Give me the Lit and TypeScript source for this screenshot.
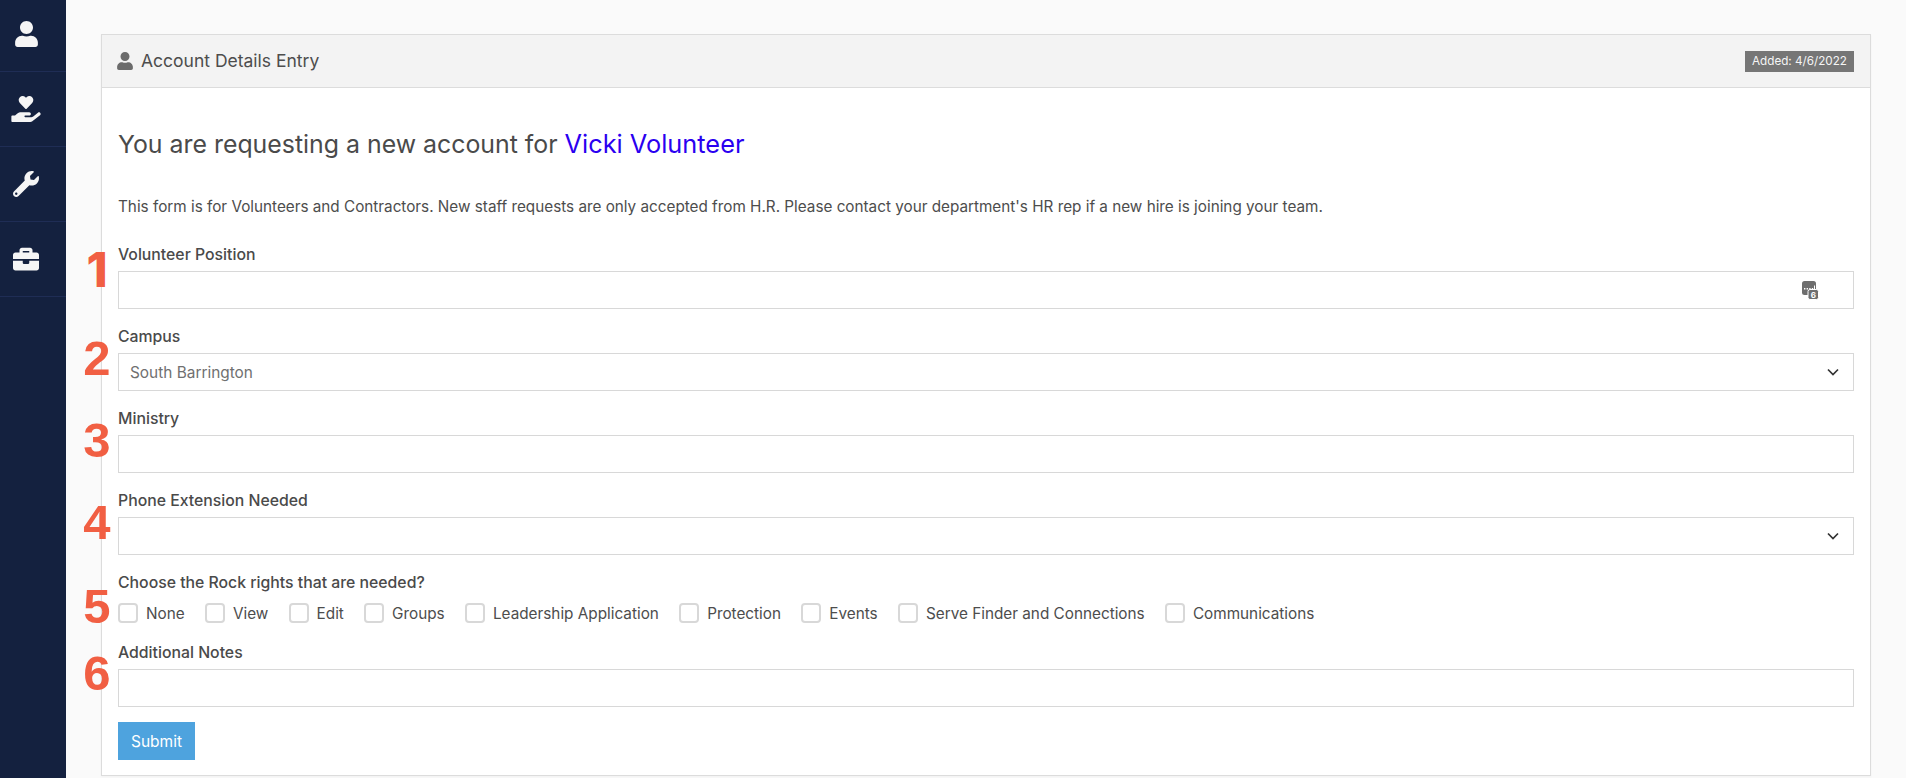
import { LitElement, html, css, svg } from "lit";
import { customElement } from "lit/decorators.js";

const USER = "M224 256c70.7 0 128-57.3 128-128S294.7 0 224 0 96 57.3 96 128s57.3 128 128 128zm89.6 32h-16.7c-22.2 10.2-46.9 16-72.9 16s-50.6-5.8-72.9-16h-16.7C60.2 288 0 348.2 0 422.4V464c0 26.5 21.5 48 48 48h352c26.5 0 48-21.5 48-48v-41.6c0-74.2-60.2-134.4-134.4-134.4z";
const HAND = "M275.3 250.5c7 7.4 18.4 7.4 25.5 0l108.9-114.2c31.6-33.2 29.8-88.2-5.6-118.8-30.8-26.7-76.7-21.9-104.9 7.7L288 36.9l-11.1-11.6C248.7-4.4 202.8-9.2 172 17.5c-35.3 30.6-37.2 85.6-5.6 118.8l108.9 114.2zm290 77.6c-11.8-10.7-30.2-10-42.6 0L430.3 402c-11.3 9.1-25.4 14-40 14H272c-8.8 0-16-7.2-16-16s7.2-16 16-16h78.3c15.9 0 30.7-10.9 33.3-26.6 3.3-20-12.1-37.4-31.6-37.4H192c-27 0-53.1 9.3-74.1 26.3L71.4 384H16c-8.8 0-16 7.2-16 16v96c0 8.8 7.2 16 16 16h356.8c14.5 0 28.6-4.9 40-14l151.2-121c15.2-12.2 16.4-35.1 1.3-48.9z";
const WRENCH = "M507.73 109.1c-2.24-9.03-13.54-12.09-20.12-5.51l-74.36 74.36-67.88-11.31-11.31-67.88 74.36-74.36c6.62-6.62 3.43-17.9-5.66-20.16-47.38-11.74-99.55.91-136.58 37.93-39.64 39.64-50.55 97.1-34.05 147.2L18.74 402.76c-24.99 24.99-24.99 65.51 0 90.5 24.99 24.99 65.51 24.99 90.5 0l213.21-213.21c50.12 16.71 107.47 5.68 147.37-34.22 37.07-37.07 49.7-89.32 37.91-136.73zM64 472c-13.25 0-24-10.75-24-24 0-13.26 10.75-24 24-24s24 10.74 24 24c0 13.25-10.75 24-24 24z";
const CASE = "M320 336c0 8.84-7.16 16-16 16h-96c-8.84 0-16-7.16-16-16v-48H0v144c0 25.6 22.4 48 48 48h416c25.6 0 48-22.4 48-48V288H320v48zm144-208h-80V80c0-25.6-22.4-48-48-48H176c-25.6 0-48 22.4-48 48v48H48c-25.6 0-48 22.4-48 48v80h512v-80c0-25.6-22.4-48-48-48zm-144 0H192V96h128v32z";

const navItems = [
  { d: USER, vb: "0 0 448 512", w: 23 },
  { d: HAND, vb: "0 0 576 512", w: 30 },
  { d: WRENCH, vb: "0 0 512 512", w: 26 },
  { d: CASE, vb: "0 0 512 512", w: 26 },
];

const rights = ["None", "View", "Edit", "Groups", "Leadership Application", "Protection", "Events", "Serve Finder and Connections", "Communications"];

@customElement("app-root")
export class AppRoot extends LitElement {
  static styles = css`
    :host { display: flex; height: 778px; overflow: hidden; background: #fafafa; font-family: Inter, "Liberation Sans", sans-serif; color: #4d4d4d; font-size: 15.3px; }
    .side { width: 66px; flex: none; background: #14213f; display: flex; flex-direction: column; }
    .nav { margin-top: -3px; }
    .nav-item { height: 74px; border-bottom: 1px solid #1f2d55; display: flex; align-items: center; justify-content: center; padding-right: 14px; }
    .nav-item svg { height: 26px; fill: #f5f5f5; display: block; }
    main { flex: 1; padding: 34px 35px 0; min-width: 0; }
    .card { border: 1px solid #dcdcdc; background: #fff; box-shadow: 0 1px 2px rgba(0,0,0,.04); }
    .head { height: 52px; background: #f3f3f3; border-bottom: 1px solid #dcdcdc; display: flex; align-items: center; padding: 0 16px; }
    .head svg { width: 16px; height: 18px; fill: #6b6b6b; margin-right: 8px; margin-left: -1px; }
    .head h2 { margin: 0 0 2px; flex: 1; font-size: 17.5px; font-weight: 400; color: #4d4d4d; }
    .badge { background: #767676; color: #f5f5f5; font-size: 11.7px; line-height: 21px; height: 21px; padding: 0 7px; }
    .body { padding: 0 16px 15px; }
    h1 { margin: 0; padding-top: 37px; font-size: 24.87px; line-height: 38px; font-weight: 400; color: #4a4a4a; }
    h1 span { color: #2a00f0; font-size: 25.35px; }
    p { margin: 0; padding-top: 32px; line-height: 24px; font-size: 15.28px; }
    .intro { margin-bottom: 24px; }
    .field { position: relative; margin-bottom: 16px; }
    .field.tight { margin-bottom: 18px; }
    .field.last { margin-bottom: 15px; }
    label.t { display: block; height: 22px; line-height: 24px; margin-bottom: 6px; font-size: 15.8px; font-weight: 500; color: #4a4a4a; }
    .ctl { height: 38px; box-sizing: border-box; border: 1px solid #d8d8d8; background: #fff; display: flex; align-items: center; padding: 0 11px; color: #707070; position: relative; font-size: 15.4px; }
    .ctl svg.chev { position: absolute; right: 14px; top: 14px; width: 12px; height: 8px; fill: none; stroke: #333; stroke-width: 1.7; }
    .ctl svg.pw { position: absolute; right: 34px; top: 9px; width: 17px; height: 19px; }
    .num { position: absolute; left: -36px; width: 30px; text-align: center; font-family: "Liberation Sans", sans-serif; font-weight: 700; font-size: 49px; line-height: 50px; color: #f15f43; pointer-events: none; }
    .num.one { font-family: Inter, sans-serif; font-weight: 800; font-size: 48px; }
    .checks { display: flex; gap: 20.25px; margin-top: 10px; }
    .check { display: flex; align-items: center; gap: 8px; height: 20px; line-height: 20px; }
    .check .txt { margin-top: 2px; }
    .box { width: 20px; height: 20px; box-sizing: border-box; border: 2px solid #d8d8d8; border-radius: 4px; background: #fff; }
    button { display: block; width: 77px; height: 38px; margin: 0; border: 0; background: #4ea3de; color: #fff; font: 400 15.5px Inter, "Liberation Sans", sans-serif; padding: 0; }
  `;

  private num(n: number, top: number) {
    return html`<div class="num ${n === 1 ? "one" : ""}" style="top:${top}px">${n}</div>`;
  }

  render() {
    const chev = html`<svg class="chev" viewBox="0 0 12 8"><path d="M1 1.5l5 5 5-5"></path></svg>`;
    return html`
      <aside class="side">
        <div class="nav">
          ${navItems.map(
            (n) => html`<div class="nav-item"><svg viewBox=${n.vb} style="width:${n.w}px">${svg`<path d=${n.d}></path>`}</svg></div>`
          )}
        </div>
      </aside>
      <main>
        <section class="card">
          <header class="head">
            <svg viewBox="0 0 448 512"><path d=${USER}></path></svg>
            <h2>Account Details Entry</h2>
            <span class="badge">Added: 4/6/2022</span>
          </header>
          <div class="body">
            <h1>You are requesting a new account for <span>Vicki Volunteer</span></h1>
            <p class="intro">This form is for Volunteers and Contractors. New staff requests are only accepted from H.R. Please contact your department's HR rep if a new hire is joining your team.</p>

            <div class="field">
              ${this.num(1, 2)}
              <label class="t">Volunteer Position</label>
              <div class="ctl">
                <svg class="pw" viewBox="0 0 17 19">
                  <rect x="0" y="0" width="14" height="14" rx="2.5" fill="#6e6e6e"></rect>
                  <path d="M2 7h1.4v1.4H2zM4.6 7H6v1.4H4.6zM7.2 7h1.4v1.4H7.2zM9.8 7h1.4v1.4H9.8zM12 4.4h1v4h-1z" fill="#fff"></path>
                  <rect x="6" y="8.5" width="10.5" height="10" rx="2" fill="#6e6e6e" stroke="#fff" stroke-width="1"></rect>
                  <text x="11.25" y="16.7" text-anchor="middle" font-size="8" font-weight="700" fill="#fff" font-family="Inter, sans-serif">6</text>
                </svg>
              </div>
            </div>
            <div class="field">
              ${this.num(2, 8)}
              <label class="t">Campus</label>
              <div class="ctl">South Barrington${chev}</div>
            </div>
            <div class="field">
              ${this.num(3, 8)}
              <label class="t">Ministry</label>
              <div class="ctl"></div>
            </div>
            <div class="field">
              ${this.num(4, 8)}
              <label class="t">Phone Extension Needed</label>
              <div class="ctl">${chev}</div>
            </div>
            <div class="field tight">
              ${this.num(5, 10)}
              <label class="t">Choose the Rock rights that are needed?</label>
              <div class="checks">
                ${rights.map((r) => html`<div class="check"><span class="box"></span><span class="txt">${r}</span></div>`)}
              </div>
            </div>
            <div class="field last">
              ${this.num(6, 7)}
              <label class="t">Additional Notes</label>
              <div class="ctl"></div>
            </div>
            <button>Submit</button>
          </div>
        </section>
      </main>
    `;
  }
}
